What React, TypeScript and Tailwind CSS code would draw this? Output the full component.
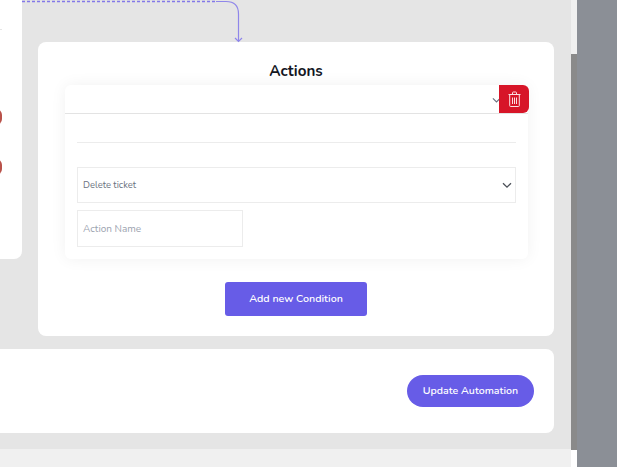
const font = "font-['Nunito','Lato','Noto_Sans',sans-serif]";

function TrashIcon() {
  return (
    <svg width="13" height="16" viewBox="0 0 13 16" fill="none" stroke="#fbdfe2" strokeWidth="1">
      <path d="M0.500 3.500h12M4.500 3.500V1.800Q4.500 1 5.300 1h2.400Q8.500 1 8.500 1.800v1.700" />
      <path d="M1.700 3.500v11.200q0 .8.800.8h8q.8 0 .8-.8V3.500" />
      <path d="M4.500 6.500v6.500M6.500 6.500v6.500M8.500 6.500v6.500" />
    </svg>
  );
}

function Chevron({ color, size = 10 }: { color: string; size?: number }) {
  return (
    <svg width={size} height="7" viewBox="0 0 10 7" fill="none" stroke={color} strokeWidth="1.300">
      <path d="M1 1.200l4 4 4-4" />
    </svg>
  );
}

export default function App() {
  return (
    <div className={`flex h-[467px] w-[617px] overflow-hidden ${font}`}>
      <div className="relative flex w-[571px] flex-col bg-[#e5e5e5]">
        {/* connector from the trigger above */}
        <svg className="absolute left-[22px] top-0" width="224" height="44" viewBox="0 0 224 44" fill="none">
          <path d="M0 1.500H194" stroke="#8378e8" strokeWidth="1.300" strokeDasharray="3 2" />
          <path d="M194 1.500H204Q216.500 1.500 216.500 14V41" stroke="#8f86ea" strokeWidth="1.200" />
          <path d="M213 38l3.500 3.500 3.500-3.500" stroke="#8f86ea" strokeWidth="1.200" />
        </svg>

        <div className="flex h-[349px] shrink-0 items-start">
          <div className="relative h-[259px] w-[22px] shrink-0 overflow-hidden rounded-br-lg bg-white">
            <span className="absolute left-0 top-[29px] h-px w-[2px] bg-[#e5e5e5]" />
            <span className="absolute left-[-10px] top-[109px] h-[16px] w-[12px] rounded-full bg-[#b9524a]" />
            <span className="absolute left-[-10px] top-[159px] h-[16px] w-[12px] rounded-full bg-[#b9524a]" />
          </div>

          <div className="ml-4 mt-[42px] flex h-[294px] w-[516px] flex-col items-center rounded-lg bg-white">
            <h2 className="mt-[19px] h-6 text-[15.200px] leading-5 font-bold text-[#14171f]">Actions</h2>

            <div className="ml-[27px] w-[463px] self-start rounded-md bg-white shadow-[0_0_16px_rgba(0,0,0,0.06)]">
              <div className="flex h-[29px] items-center justify-end border-b border-[#e3e3e3]">
                <span className="mr-[-2px] mt-[2px]"><Chevron color="#6b7280" size={9} /></span>
                <button className="-mr-px flex h-[28px] w-[30px] items-center justify-center self-start rounded-r-md bg-[#d71528]">
                  <TrashIcon />
                </button>
              </div>
              <div className="flex h-[145px] flex-col px-3">
                <div className="mt-[28px] border-t border-[#ececec]" />
                <div className="mt-6 flex h-[36px] items-center justify-between border border-[#ececec] px-[3px] pl-[5px] text-[9.400px] text-[#6b7280]">
                  <span className="mt-px">Delete ticket</span>
                  <Chevron color="#4b5058" />
                </div>
                <div className="mt-[7px] flex h-[37px] w-[166px] items-center border border-[#ececec] pl-[5px] text-[10px] text-[#9ca3af]">
                  <span className="mt-[2px]">Action Name</span>
                </div>
              </div>
            </div>

            <button className="mt-[23px] h-[34px] w-[142px] rounded-[3px] bg-[#675ce7] text-[10.700px] font-semibold text-white">
              Add new Condition
            </button>
          </div>
        </div>

        <div className="flex h-[84px] w-[554px] shrink-0 items-center justify-end rounded-r-lg bg-white pr-5">
          <button className="h-8 w-[127px] rounded-full bg-[#675ce7] text-[10.600px] font-semibold text-white">
            Update Automation
          </button>
        </div>

        <div className="mt-auto h-[18px] bg-[#f0f0f0]" />
      </div>

      {/* page scrollbar */}
      <div className="flex w-[6px] shrink-0 flex-col bg-white">
        <div className="h-[54px] bg-[#f0f0f0]" />
        <div className="h-[396px] bg-[#8a8a8a]" />
      </div>

      <div className="flex-1 bg-[#8b8f96]" />
    </div>
  );
}
